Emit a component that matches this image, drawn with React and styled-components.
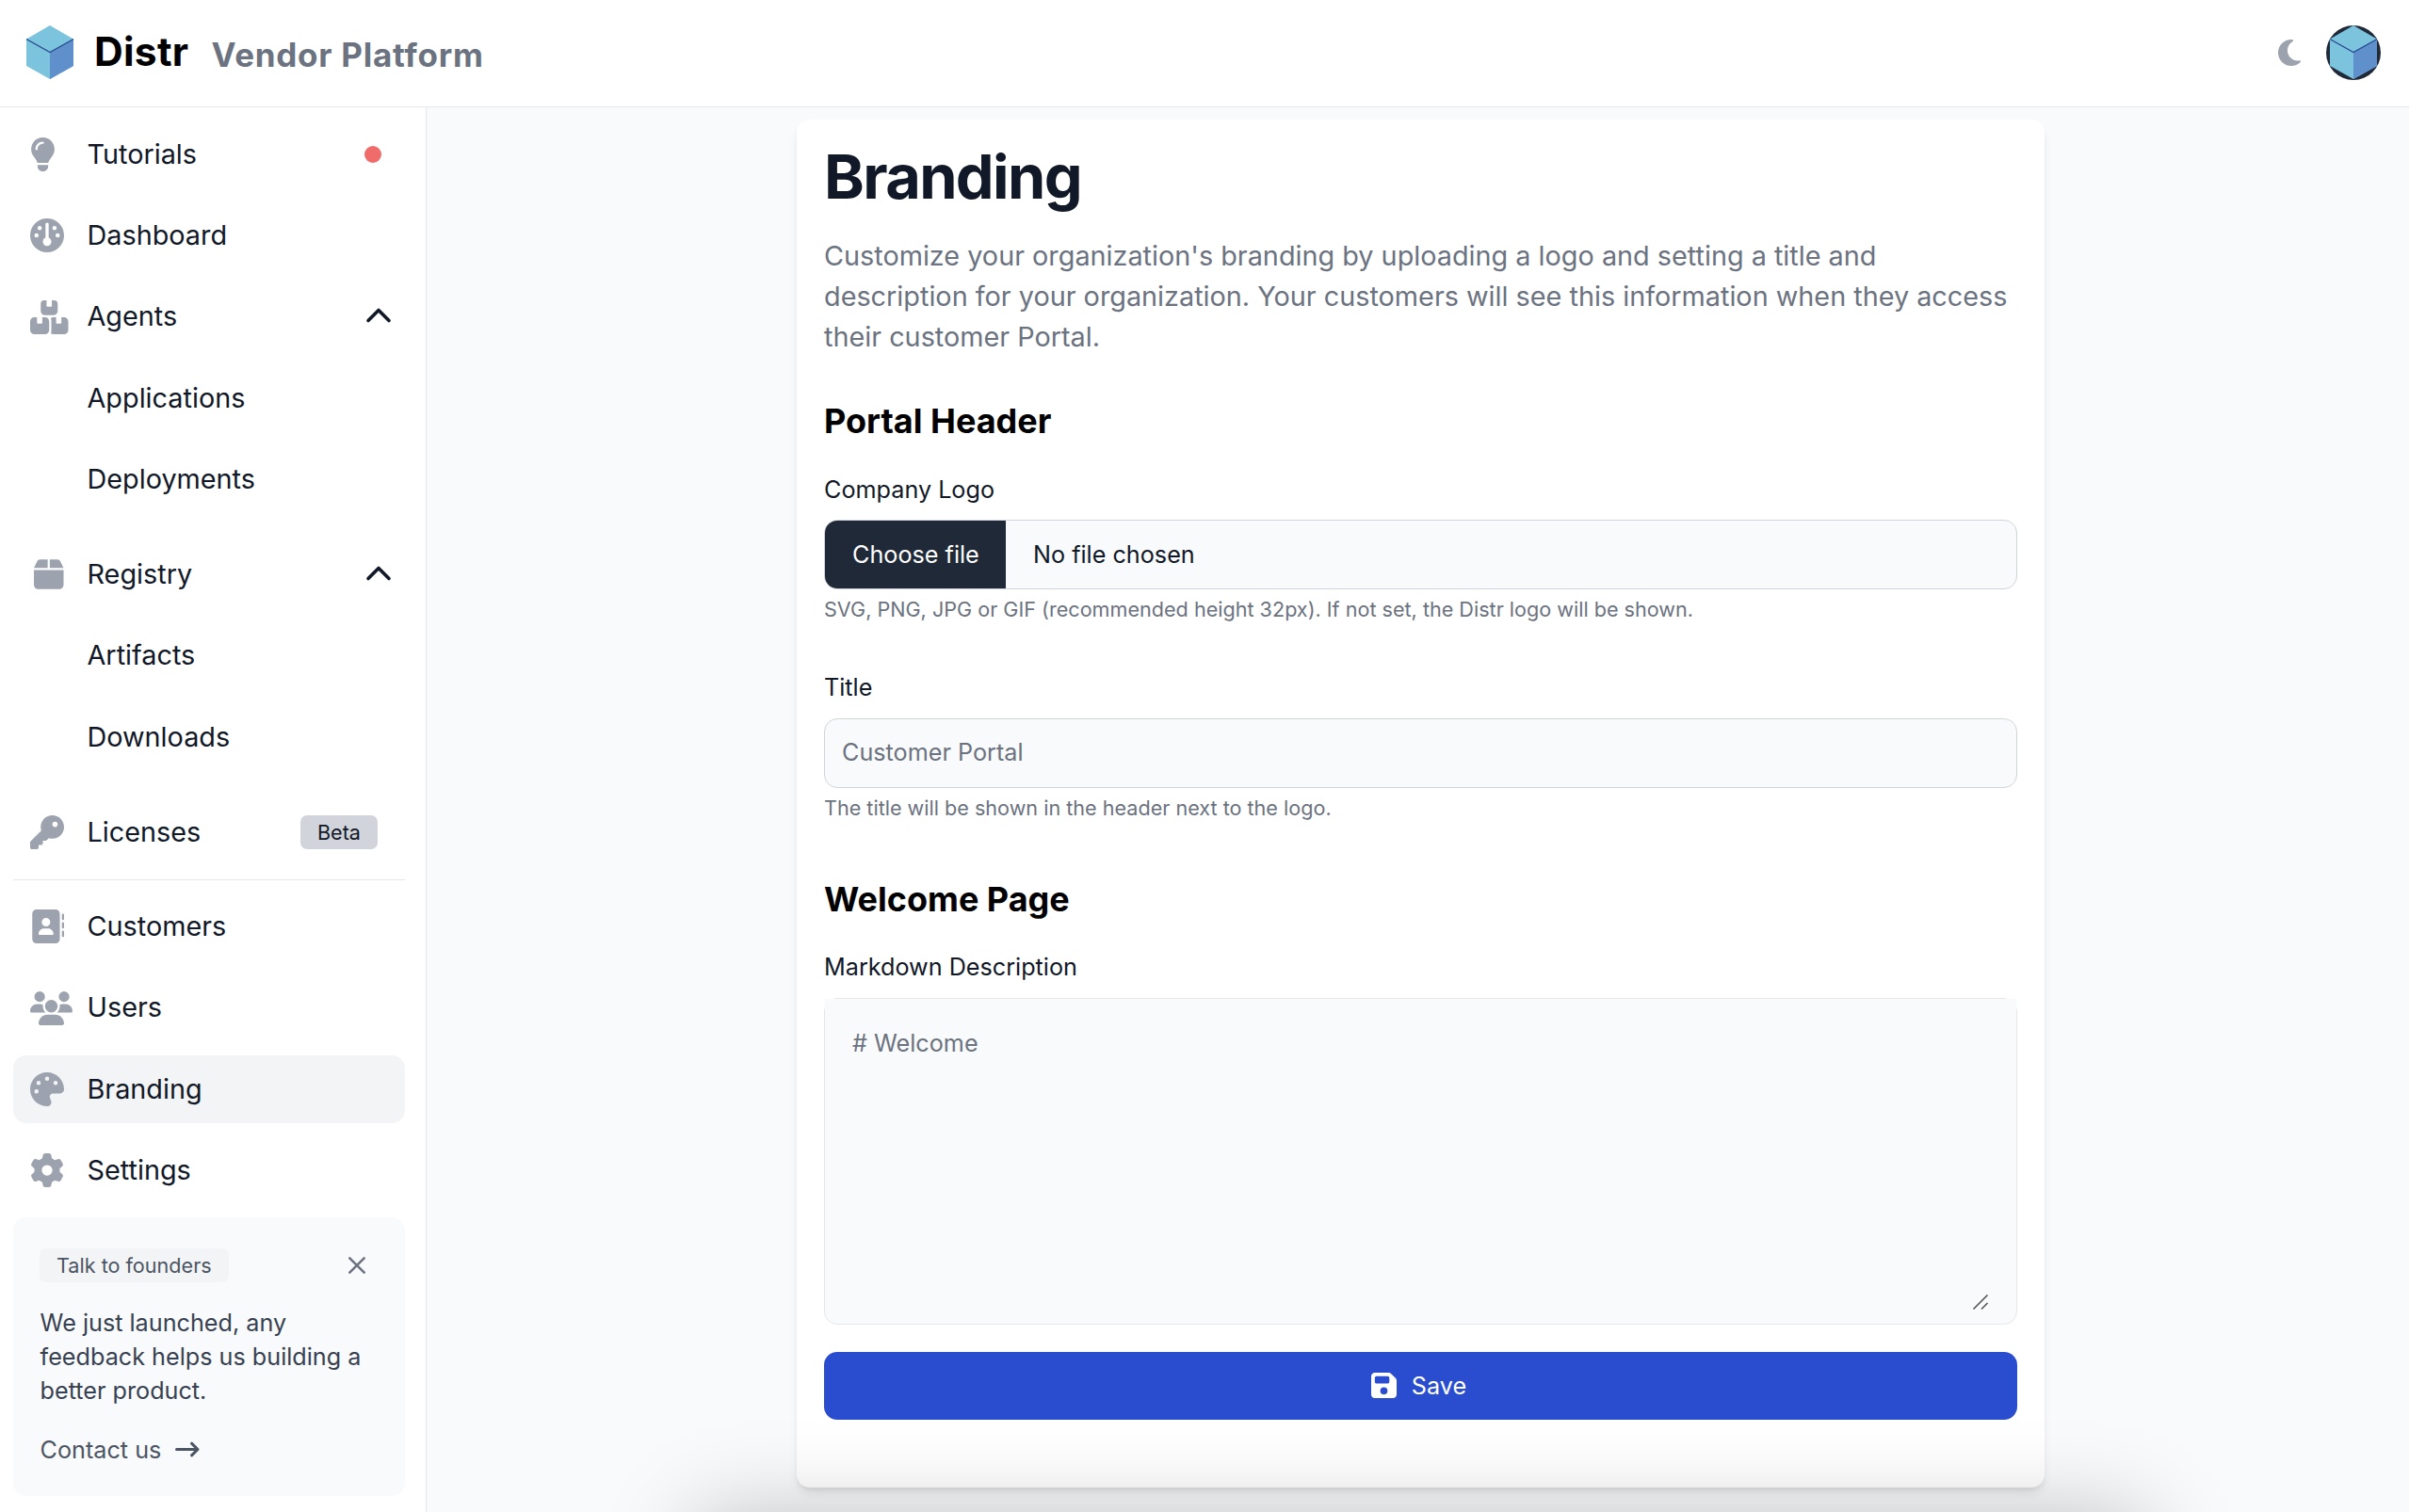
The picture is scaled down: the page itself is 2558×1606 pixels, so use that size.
import React from 'react';
import styled, { createGlobalStyle } from 'styled-components';
import {
  FaLightbulb,
  FaGauge,
  FaBoxesStacked,
  FaBox,
  FaKey,
  FaAddressBook,
  FaUsers,
  FaPalette,
  FaGear,
  FaMoon,
  FaFloppyDisk,
} from 'react-icons/fa6';

const GlobalStyle = createGlobalStyle`
  *, *::before, *::after { box-sizing: border-box; }
  html, body { margin: 0; padding: 0; background: #f9fafb; }
  body {
    font-family: Inter, "Liberation Sans", sans-serif;
    font-size: 28.8px;
    line-height: 43.2px;
    color: #111827;
    -webkit-font-smoothing: antialiased;
  }
  h1, h2, p { margin: 0; }
  button, input, textarea { font: inherit; color: inherit; margin: 0; }
`;

const Page = styled.div`
  position: relative;
  display: flex;
  flex-direction: column;
  width: 2558px;
  height: 1606px;
  overflow: hidden;
  background: #f9fafb;
`;

const Header = styled.header`
  flex: none;
  display: flex;
  align-items: center;
  justify-content: space-between;
  height: 114px;
  padding: 0 30px 2px 28px;
  background: #fff;
  border-bottom: 1px solid #e5e7eb;
`;

const Brand = styled.div`
  display: flex;
  align-items: center;
  font-weight: 700;
`;

const BrandName = styled.span`
  margin-left: 22px;
  padding-bottom: 2px;
  font-size: 42.5px;
  font-weight: 700;
  line-height: 58px;
  letter-spacing: 0.3px;
  color: #000;
`;

const BrandSub = styled.span`
  margin-left: 24px;
  padding-top: 4px;
  font-size: 35px;
  font-weight: 700;
  line-height: 52px;
  letter-spacing: 0.75px;
  color: #6b7280;
`;

const HeaderActions = styled.div`
  display: flex;
  align-items: center;
  gap: 27px;
  color: #9ca3af;
`;

const Avatar = styled.div`
  display: flex;
  align-items: center;
  justify-content: center;
  width: 58px;
  height: 58px;
  border-radius: 50%;
  overflow: hidden;
  background: #1f2937;
`;

const IconBox = styled.span`
  display: flex;
  flex: none;
  align-items: center;
  width: ${(p) => p.$slot || 'auto'};
  padding-left: ${(p) => p.$indent || 0}px;
  color: ${(p) => p.$color || '#9ca3af'};

  svg {
    flex: none;
    width: ${(p) => p.$w || p.$size}px;
    height: ${(p) => p.$size}px;
  }
`;

const Body = styled.div`
  flex: 1;
  display: flex;
  min-height: 0;
`;

const Sidebar = styled.aside`
  flex: none;
  display: flex;
  flex-direction: column;
  width: 453px;
  padding: 14px 22px 0 14px;
  background: #fff;
  border-right: 1px solid #e5e7eb;
`;

const NavList = styled.nav`
  display: flex;
  flex-direction: column;
  gap: 14.4px;
`;

const NavGroup = styled.div`
  display: flex;
  flex-direction: column;
  gap: 14.4px;
  padding-bottom: 14.4px;
`;

const Divider = styled.div`
  height: 1px;
  margin: 13.6px 0 13.8px;
  background: #e5e7eb;
`;

const NavItem = styled.a`
  display: flex;
  align-items: center;
  height: 72px;
  padding: 0 14px 0 18px;
  border-radius: 14px;
  background: ${(p) => (p.$active ? '#f3f4f6' : 'transparent')};
`;

const NavLabel = styled.span`
  flex: 1;
  padding-left: ${(p) => (p.$nested ? 60.5 : 0)}px;
  padding-bottom: 1.4px;
`;

const Dot = styled.span`
  width: 18px;
  height: 18px;
  margin-right: 11px;
  border-radius: 50%;
  background: #f06c6b;
`;

const ChevronSvg = styled.svg`
  margin-bottom: 3px;
`;

const Badge = styled.span`
  display: inline-flex;
  align-items: center;
  justify-content: center;
  height: 36px;
  padding: 0 18px;
  margin-right: ${(p) => p.$mr || 0}px;
  border-radius: 7px;
  font-size: 21.6px;
  line-height: 28.8px;
  color: ${(p) => p.$color};
  background: ${(p) => p.$bg};
`;

const Promo = styled.section`
  display: flex;
  flex-direction: column;
  height: 296px;
  margin-top: 13.6px;
  padding: 29px 28px;
  border-radius: 14px;
  background: #f9fafb;
`;

const PromoTop = styled.div`
  display: flex;
  align-items: center;
  justify-content: space-between;
  height: 44px;
  margin-bottom: 21px;
  padding-right: 13px;
`;

const PromoText = styled.p`
  padding-left: 0.6px;
  font-size: 25.2px;
  line-height: 36px;
  color: #374151;
`;

const PromoLink = styled.a`
  display: flex;
  align-items: center;
  gap: 14px;
  margin-top: 27px;
  padding-left: 0.6px;
  font-size: 25.2px;
  line-height: 36px;
  color: #4b5563;
`;

const Main = styled.main`
  flex: 1;
  padding: 13px 0 0 393px;
`;

const Card = styled.section`
  display: flex;
  flex-direction: column;
  width: 1325px;
  height: 1453px;
  padding: 28px 29px;
  border-radius: 14px;
  background: #fff;
  box-shadow: 0 7px 11px -2px rgba(0, 0, 0, 0.1), 0 4px 7px -4px rgba(0, 0, 0, 0.1);
`;

const Title = styled.h1`
  font-size: 64.8px;
  font-weight: 700;
  line-height: 65px;
  letter-spacing: -0.025em;
`;

const Lead = styled.p`
  margin-top: 30px;
  color: #6b7280;
`;

const SectionTitle = styled.h2`
  margin-top: ${(p) => p.$mt}px;
  font-size: 36px;
  font-weight: 700;
  line-height: 50px;
  color: #000;
`;

const Label = styled.label`
  margin-top: ${(p) => p.$mt}px;
  font-size: 25.2px;
  line-height: 36px;
`;

const Hint = styled.p`
  margin-top: 7px;
  font-size: 21.6px;
  line-height: 28px;
  color: #6b7280;
`;

const FileField = styled.div`
  flex: none;
  display: flex;
  height: 74px;
  margin-top: 14px;
  border: 1px solid #d1d5db;
  border-radius: 14px;
  overflow: hidden;
  font-size: 25.2px;
  line-height: 36px;
  background: #f9fafb;
`;

const FileButton = styled.span`
  display: flex;
  align-items: center;
  width: 192px;
  padding-left: 29px;
  color: #fff;
  background: #1f2937;
`;

const FileName = styled.span`
  display: flex;
  align-items: center;
  padding-left: 29px;
`;

const TextInput = styled.input`
  flex: none;
  height: 74px;
  margin-top: 15px;
  padding: 0 18px 2px;
  border: 1px solid #d1d5db;
  border-radius: 14px;
  outline: none;
  font-size: 25.2px;
  background: #f9fafb;

  &::placeholder {
    color: #6b7280;
    opacity: 1;
  }
`;

const Editor = styled.div`
  position: relative;
  flex: none;
  height: 347px;
  margin-top: 15px;
  border: 1px solid #e5e7eb;
  border-radius: 14px;
  background: #f9fafb;
`;

const EditorArea = styled.textarea`
  display: block;
  width: 100%;
  height: 330px;
  padding: 29px;
  border: 0;
  outline: none;
  resize: none;
  font-size: 25.2px;
  line-height: 36px;
  background: #f9fafb;

  &::placeholder {
    color: #6b7280;
    opacity: 1;
  }
`;

const ResizeGrip = styled.svg`
  position: absolute;
  right: 29px;
  bottom: 14px;
`;

const SaveButton = styled.button`
  display: flex;
  flex: none;
  align-items: center;
  justify-content: center;
  gap: 16px;
  height: 72px;
  margin-top: 29px;
  padding: 0 4px 0 0;
  border: 0;
  border-radius: 14px;
  font-size: 25.2px;
  line-height: 36px;
  color: #fff;
  background: #2a4dd0;
`;

const BottomShade = styled.div`
  position: absolute;
  top: 1613px;
  left: 739px;
  width: 1539px;
  height: 300px;
  box-shadow: 0 0 90px rgba(0, 0, 0, 0.25);
  pointer-events: none;
`;

const Cube = () => (
  <svg width="50" height="57" viewBox="0 0 50 57">
    <path d="M25 0L50 14.5V43L25 57L0 43V14.5Z" fill="#7cc3de" />
    <path d="M25 28.5L50 14.5V43L25 57Z" fill="#5f90cb" />
    <path d="M0 14.6L25 28.5L50 14.6" fill="none" stroke="#27498f" strokeWidth="1.2" />
  </svg>
);

const Chevron = () => (
  <ChevronSvg width="28" height="18" viewBox="0 0 28 18">
    <path d="M3 14.5L14 3.5L25 14.5" fill="none" stroke="#111827" strokeWidth="3.6" strokeLinecap="round" strokeLinejoin="round" />
  </ChevronSvg>
);

const Cross = () => (
  <svg width="20" height="20" viewBox="0 0 20 20">
    <path d="M2.3 2.3L17.7 17.7M17.7 2.3L2.3 17.7" fill="none" stroke="#6b7280" strokeWidth="2.6" strokeLinecap="round" />
  </svg>
);

const Arrow = () => (
  <svg width="28" height="20" viewBox="0 0 28 20">
    <path d="M2.5 9.5H25M18.5 3.2L25 9.5L18.5 15.8" fill="none" stroke="#4b5563" strokeWidth="3" strokeLinecap="round" strokeLinejoin="round" />
  </svg>
);

const Item = ({ icon: Icon, iconWidth, label, indent, active, nested, children }) => (
  <NavItem $active={active}>
    {Icon && (
      <IconBox $size={36} $w={iconWidth} $slot="60.5px" $indent={indent}>
        <Icon />
      </IconBox>
    )}
    <NavLabel $nested={nested}>{label}</NavLabel>
    {children}
  </NavItem>
);

export default function App() {
  return (
    <Page>
      <GlobalStyle />
      <Header>
        <Brand>
          <Cube />
          <BrandName>Distr</BrandName>
          <BrandSub>Vendor Platform</BrandSub>
        </Brand>
        <HeaderActions>
          <IconBox $size={32} $w={24}>
            <FaMoon />
          </IconBox>
          <Avatar>
            <Cube />
          </Avatar>
        </HeaderActions>
      </Header>
      <Body>
        <Sidebar>
          <NavList>
            <Item icon={FaLightbulb} iconWidth={27} label="Tutorials">
              <Dot />
            </Item>
            <Item icon={FaGauge} label="Dashboard" />
            <NavGroup>
              <Item icon={FaBoxesStacked} iconWidth={40.5} label="Agents">
                <Chevron />
              </Item>
              <Item nested label="Applications" />
              <Item nested label="Deployments" />
            </NavGroup>
            <NavGroup>
              <Item icon={FaBox} iconWidth={31.5} indent={4} label="Registry">
                <Chevron />
              </Item>
              <Item nested label="Artifacts" />
              <Item nested label="Downloads" />
            </NavGroup>
            <Item icon={FaKey} label="Licenses">
              <Badge $bg="#d1d5db" $color="#111827" $mr={15}>Beta</Badge>
            </Item>
          </NavList>
          <Divider />
          <NavList>
            <Item icon={FaAddressBook} label="Customers" />
            <Item icon={FaUsers} iconWidth={45} label="Users" />
            <Item icon={FaPalette} label="Branding" active />
            <Item icon={FaGear} label="Settings" />
          </NavList>
          <Promo>
            <PromoTop>
              <Badge $bg="#f3f4f6" $color="#4b5563">Talk to founders</Badge>
              <Cross />
            </PromoTop>
            <PromoText>We just launched, any feedback helps us building a better product.</PromoText>
            <PromoLink>
              Contact us
              <Arrow />
            </PromoLink>
          </Promo>
        </Sidebar>
        <Main>
          <Card>
            <Title>Branding</Title>
            <Lead>
              Customize your organization's branding by uploading a logo and setting a title and
              description for your organization. Your customers will see this information when they
              access their customer Portal.
            </Lead>
            <SectionTitle $mt={42}>Portal Header</SectionTitle>
            <Label $mt={30}>Company Logo</Label>
            <FileField>
              <FileButton>Choose file</FileButton>
              <FileName>No file chosen</FileName>
            </FileField>
            <Hint>SVG, PNG, JPG or GIF (recommended height 32px). If not set, the Distr logo will be shown.</Hint>
            <Label $mt={51}>Title</Label>
            <TextInput placeholder="Customer Portal" />
            <Hint>The title will be shown in the header next to the logo.</Hint>
            <SectionTitle $mt={58}>Welcome Page</SectionTitle>
            <Label $mt={29}>Markdown Description</Label>
            <Editor>
              <EditorArea placeholder="# Welcome" />
              <ResizeGrip width="18" height="18" viewBox="0 0 18 18">
                <path d="M1.5 16.5L16.5 1.5M10 16.5L16.5 10" fill="none" stroke="#555" strokeWidth="1.6" />
              </ResizeGrip>
            </Editor>
            <SaveButton>
              <IconBox $size={31} $w={27} $color="#fff">
                <FaFloppyDisk />
              </IconBox>
              Save
            </SaveButton>
          </Card>
        </Main>
      </Body>
      <BottomShade />
    </Page>
  );
}
